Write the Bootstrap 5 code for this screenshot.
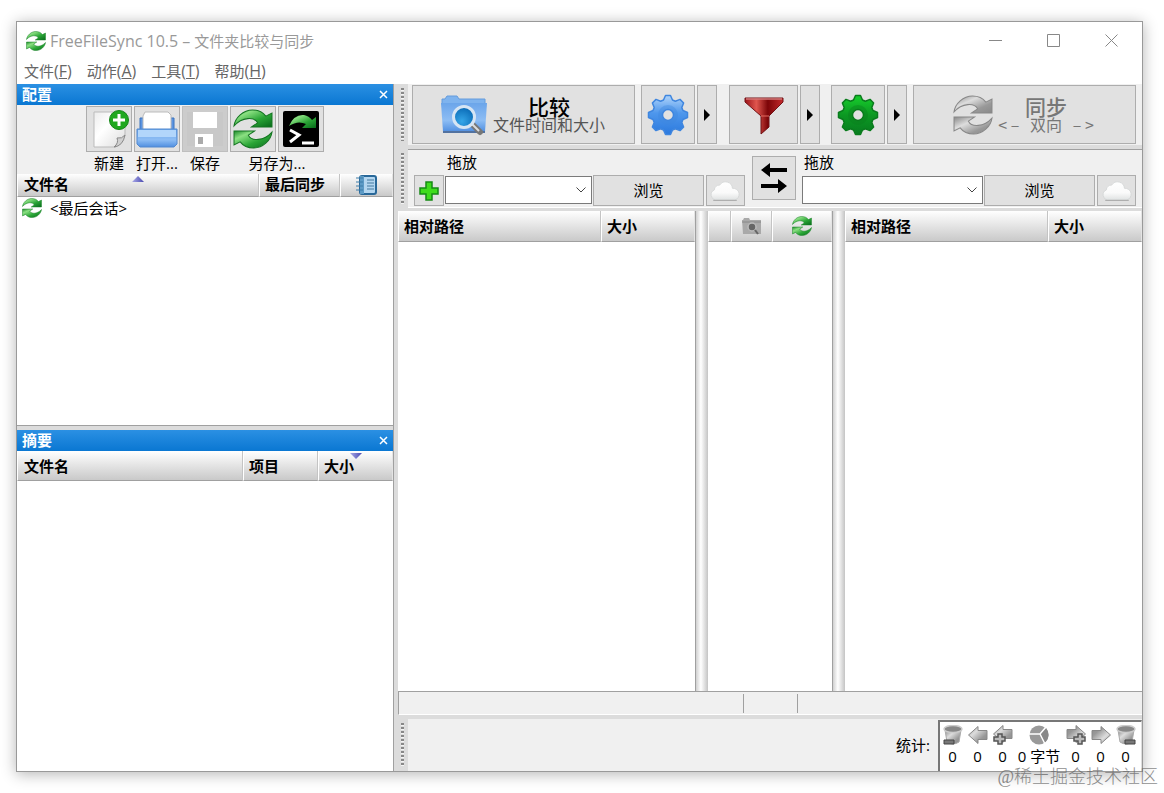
<!DOCTYPE html>
<html lang="zh-CN">
<head>
<meta charset="utf-8">
<meta name="viewport" content="width=device-width, initial-scale=1">
<title>FreeFileSync 10.5</title>
<link href="https://cdn.jsdelivr.net/npm/bootstrap@5.3.0/dist/css/bootstrap.min.css" rel="stylesheet">
<style>
body{font-family:"Open Sans","Noto Sans CJK SC",sans-serif;font-size:15px;line-height:20px;color:#000;background:#fff}
.page{min-height:100vh;padding:21px 21px 21px 16px}
.window{border:1px solid #999;box-shadow:0 2px 14px rgba(0,0,0,.3);background:#fff}
.latin{font-size:16px}
.titlebar{height:37px;color:#999;padding:0 20px 0 9px}
.titlebar button{border:0;background:none;padding:0;width:22px;height:22px;display:grid;place-items:center}
.menubar{height:25px;padding:0 7px 2px;gap:15px}
.menubar a{color:#666;text-decoration:none}
.workspace{background:#dcdcdc}
.side{width:377px;border-right:1px solid #a0a0a0}
.caption-bar{height:21px;background:linear-gradient(#2b90e3,#0a77d2);color:#fff;padding:0 5px;font-weight:700;line-height:20px}
.caption-bar button{border:0;background:none;padding:0;width:9px;height:20px;display:grid;place-items:center}
.toolbox{background:#f0f0f0;height:69px;gap:2px;padding-top:1px}
.lbl{line-height:22px}
.tool{background:#e1e1e1;border:1px solid #adadad;border-radius:0;padding:0;color:#000;font-size:15px;line-height:20px;display:grid;place-items:center}
.tool:disabled{background:#ccc;border-color:#bfbfbf;opacity:1;color:#777}
.sq{width:46px;height:46px}
.grid-head{width:100%;table-layout:fixed;border-collapse:separate;border-spacing:0;line-height:20px}
.grid-head th{position:relative;padding:0 0 0 5px;height:30px;font-weight:700;background:linear-gradient(#fff,#e4e4e4 50%,#c9c9c9);border-bottom:1px solid #a0a0a0;border-left:1px solid #fff;border-right:1px solid #c4c4c4;white-space:nowrap}
.grid-head th:first-child{padding-left:6px}
.grid-head th:last-child{border-right-color:#e4e4e4}
.grid-head.short th{height:23px;padding-bottom:2px}
.grid-head.tall th{padding-left:5px;height:31px}
.grid-head.short th.pic,.grid-head.tall th.pic{text-align:center;padding:0}
.grid-head td{height:22px;padding:0 5px}
.sort-mark{position:absolute;top:2px;left:50%;margin-left:-6px}
.sort-mark.near{left:37px}
.pane{background:#fff}
.grip{width:10px;padding:4px 0 4px 3px}
.grip::before{content:"";display:block;width:3px;height:100%;background:repeating-linear-gradient(#888 0 2px,#f4f4f4 2px 3px,#dcdcdc 3px 4px)}
.bar{background:#f0f0f0}
.big{height:59px}
.w-cfg{width:54px}.w-filter{width:69px}.w-drop{width:20px}
.bar .main-act{flex:1 1 0;display:flex;align-items:center;justify-content:center;gap:5px;padding-right:2px;font-family:"Noto Sans CJK SC",sans-serif}
.main-act strong{display:block;font-size:21px;line-height:20px;font-weight:500}
.main-act small{display:block;font-size:16px;line-height:17px;color:#555;white-space:pre}
.main-act.off,.main-act.off small{color:#777}
.folders{border-top:1px solid #a0a0a0;border-bottom:1px solid #fff;padding:6px 6px 0;height:59px}
.g1{gap:1px}.g2{gap:2px}.g6{gap:6px}
.drag{line-height:12px;height:19px}
.combo{--bs-form-select-bg-img:url("data:image/svg+xml,%3Csvg xmlns='http://www.w3.org/2000/svg' viewBox='0 0 12 12'%3E%3Cpath d='M1.500 3.500 6 8l4.500-4.500' fill='none' stroke='%23444'/%3E%3C/svg%3E");background-image:var(--bs-form-select-bg-img);background-size:12px;background-position:right 4px center;border:1px solid #7a7a7a;border-radius:0;height:28px;padding:0 20px 0 4px;font-size:15px;flex:1 1 0;width:0;margin-top:1px}
.field{height:31px}
.browse{width:111px;padding-bottom:2px}.cloud{width:39px;margin-left:1px}.plus{width:30px}
.swap{width:44px;height:44px;margin:0 6px 0 7px}
.split{width:13px;background:linear-gradient(90deg,#a0a0a0 0 1px,#d0d0d0 1px,#fff 45%,#c4c4c4)}
.mid{width:124px}
.status{background:#f0f0f0;border-top:1px solid #a0a0a0;border-left:1px solid #a0a0a0;border-bottom:1px solid #fff;height:24px}
.status div{border-right:1px solid #a0a0a0;margin:2px 0 1px}
.status div:last-child{border:0}
.stats{height:52px}
.stat-box{background:#fff;border:2px solid #777;border-width:2px 1px 0 2px;border-right-color:#ddd;height:51px;padding-right:3px}
.stat-box div{width:25px;text-align:center;white-space:nowrap;line-height:20px}
.stat-box div.bytes{width:48px}
.stat-box svg{display:block;margin:3px auto 1px}
.watermark{position:absolute;right:6px;bottom:4px;font-family:"Liberation Serif","Noto Sans CJK SC",serif;font-size:18px;font-weight:300;line-height:24px;color:#666;opacity:.75}
svg{display:block}
</style>
</head>
<body>
<svg width="0" height="0" class="position-absolute" aria-hidden="true">
<defs>
<linearGradient id="green" x1="0" y1="0" x2="1" y2="1"><stop offset="0" stop-color="#1c8a2a"/><stop offset=".25" stop-color="#8be082"/><stop offset=".6" stop-color="#2aa536"/><stop offset="1" stop-color="#07691a"/></linearGradient>
<linearGradient id="grey" x1="0" y1="0" x2="1" y2="1"><stop offset="0" stop-color="#888"/><stop offset=".35" stop-color="#ddd"/><stop offset=".7" stop-color="#999"/><stop offset="1" stop-color="#888"/></linearGradient>
<linearGradient id="gblue" x1="0" y1="0" x2="0" y2="1"><stop offset="0" stop-color="#b0d4fa"/><stop offset=".45" stop-color="#4e97ec"/><stop offset="1" stop-color="#2b79de"/></linearGradient>
<linearGradient id="ggreen" x1="0" y1="0" x2="0" y2="1"><stop offset="0" stop-color="#17cf2c"/><stop offset=".5" stop-color="#0c9822"/><stop offset="1" stop-color="#087c20"/></linearGradient>
<linearGradient id="fold" x1="0" y1="0" x2="0" y2="1"><stop offset="0" stop-color="#6ba5ea"/><stop offset=".6" stop-color="#8dbdf4"/><stop offset="1" stop-color="#4f8ee0"/></linearGradient>
<linearGradient id="red" x1="0" y1="0" x2="1" y2="0"><stop offset="0" stop-color="#9b1218"/><stop offset=".3" stop-color="#e0564e"/><stop offset=".6" stop-color="#7c0508"/><stop offset="1" stop-color="#c42a2c"/></linearGradient>
<linearGradient id="paper" x1="0" y1="0" x2="1" y2="1"><stop offset="0" stop-color="#ececec"/><stop offset=".4" stop-color="#fff"/><stop offset="1" stop-color="#ddd"/></linearGradient>
<linearGradient id="sort" x1="0" y1="0" x2="1" y2="0"><stop offset="0" stop-color="#a9a9e8"/><stop offset="1" stop-color="#4a4ab0"/></linearGradient>
<radialGradient id="lens" cx=".4" cy=".7" r=".7"><stop offset="0" stop-color="#35a6e8"/><stop offset="1" stop-color="#0868b4"/></radialGradient>
<linearGradient id="cloudfill" x1="0" y1="0" x2="0" y2="1"><stop offset="0" stop-color="#fff"/><stop offset=".6" stop-color="#fafafa"/><stop offset="1" stop-color="#dfe2e2"/></linearGradient>
<symbol id="sync" viewBox="0 0 39 38"><path d="M1 16C2 8 10 .5 19 .5c6 0 10 2 13 6l6-3V17H18l6-4C21 7 9 7 1 16Z"/><path d="M38 22c-1 8-9 15.500-18 15.500-6 0-10-2-13-6l-6 3V21h20l-6 4c3 6 15 6 23-3Z"/></symbol>
<symbol id="gear" viewBox="-21 -21 42 42"><path fill-rule="evenodd" stroke-linejoin="round" stroke-width="1.500" d="M15-4.500 19.500-2.500V2.500L15 4.500 13.800 7.400 15.600 12 12 15.600 7.400 13.800 4.500 15 2.500 19.500H-2.500L-4.500 15-7.400 13.800-12 15.600-15.600 12-13.800 7.400-15 4.500-19.500 2.500V-2.500L-15-4.500-13.800-7.400-15.600-12-12-15.600-7.400-13.800-4.500-15-2.500-19.500H2.500L4.500-15 7.400-13.800 12-15.600 15.600-12 13.800-7.400ZM5.500 0A5.500 5.500 0 1 0-5.500 0 5.500 5.500 0 1 0 5.500 0Z"/><circle r="8" fill="none" stroke-width="4" stroke-opacity=".4"/></symbol>
<symbol id="cloudicon" viewBox="0 0 30 20"><path d="M6 18.500a5 5 0 0 1-1-9.500 4.500 4.500 0 0 1 5-4.500 6.500 6.500 0 0 1 12 3 5.600 5.600 0 0 1 2 11Z" fill="url(#cloudfill)" stroke="#d3d6d6" stroke-width=".8"/><path d="M4 18.800h22" stroke="#aaa"/></symbol>
<symbol id="arrow" viewBox="0 0 20 18"><path d="M.5 9 10 .5v4h9v9h-9v4Z" fill="url(#grey)" stroke="#888"/></symbol>
<symbol id="bin" viewBox="0 0 20 20"><path d="M2 5l2 12q6 4 12 0L18 5Z" fill="url(#grey)" stroke="#aaa"/><ellipse cx="10" cy="4" rx="9" ry="3.500" fill="#888" stroke="#ccc" stroke-width="1.500"/></symbol>
</defs>
</svg>
<div class="page position-relative d-flex">
<main class="window d-flex flex-column flex-fill">
<header class="titlebar d-flex align-items-center">
<svg width="20" height="20" fill="url(#green)" stroke="#19822a"><use href="#sync"/></svg>
<span class="ms-1"><span class="latin">FreeFileSync 10.5 –</span> 文件夹比较与同步</span>
<div class="d-flex ms-auto" style="gap:36px">
<button type="button" aria-label="最小化"><svg width="13" height="13"><path d="M0 6.500h13" stroke="#888"/></svg></button>
<button type="button" aria-label="最大化"><svg width="13" height="13"><path d="M.5.500h12v12H.5Z" fill="none" stroke="#888"/></svg></button>
<button type="button" aria-label="关闭"><svg width="13" height="13"><path d="M.5.500l12 12m0-12-12 12" stroke="#888"/></svg></button>
</div>
</header>
<nav class="menubar d-flex align-items-center"><a href="#">文件<span class="latin">(<u>F</u>)</span></a><a href="#">动作<span class="latin">(<u>A</u>)</span></a><a href="#">工具<span class="latin">(<u>T</u>)</span></a><a href="#">帮助<span class="latin">(<u>H</u>)</span></a></nav>
<div class="workspace d-flex flex-fill">
<aside class="side d-flex flex-column flex-shrink-0">
<div class="caption-bar d-flex justify-content-between"><span>配置</span><button type="button" aria-label="关闭配置"><svg width="9" height="9"><path d="M1 1l7 7m0-7-7 7" stroke="#fff" stroke-width="1.500"/></svg></button></div>
<div class="toolbox d-flex justify-content-center text-center">
<div><button class="tool sq" type="button" aria-label="新建"><svg width="42" height="42" viewBox="0 0 42 42"><path d="M6 4h31v24L28 39H6Z" fill="url(#paper)" stroke="#bbb"/><path d="M37 27q-3 4-8 3 2 5-3 9 9-1 11-12Z" fill="#d0d0d0" stroke="#888"/><circle cx="31" cy="12" r="9.500" fill="#20a81f" stroke="#158718"/><path d="M31 6v12m-6-6h12" stroke="#fff" stroke-width="3"/></svg></button><div class="lbl text-nowrap">新建</div></div>
<div><button class="tool sq" type="button" aria-label="打开"><svg width="42" height="42" viewBox="0 0 42 42"><path d="M4 10h34v14H4Z" fill="#5c95e2" stroke="#3a72bd"/><path d="M9 4h23l3 3v18H7V8Z" fill="#fff" stroke="#bbb"/><path d="M1 21h40v15l-3 3H4l-3-3Z" fill="url(#fold)" stroke="#5389cf"/><path d="M2 22h38v7H2Z" fill="#b2d6fb"/></svg></button><div class="lbl text-nowrap">打开...</div></div>
<div><button class="tool sq" type="button" disabled aria-label="保存"><svg width="42" height="42" viewBox="0 0 42 42"><path d="M3 4h36v34H3Z" fill="#c8c8c8"/><path d="M9 4h24v16H9ZM11 26h18v13H11Z" fill="#fff"/><path d="M14 29h5v7h-5Z" fill="#aaa"/></svg></button><div class="lbl text-nowrap">保存</div></div>
<div><div class="d-flex g2"><button class="tool sq" type="button" aria-label="另存为"><svg width="40" height="40" fill="url(#green)" stroke="#157523"><use href="#sync"/></svg></button><button class="tool sq" type="button" aria-label="另存为批处理"><svg width="38" height="38" viewBox="0 0 38 38"><rect x="1" y="1" width="36" height="36" rx="2"/><path d="M7 16Q12 4 22 5q5 1 8 5l4-3v11H20l4-4q-8-4-17 2Z" fill="url(#green)"/><path d="M8 20l9 5-9 7" fill="none" stroke="#fff" stroke-width="3"/><path d="M20 33h12" stroke="#fff" stroke-width="3"/></svg></button></div><div class="lbl text-nowrap">另存为...</div></div>
</div>
<div class="pane flex-shrink-0" style="height:251px">
<table class="grid-head short">
<colgroup><col><col style="width:81px"><col style="width:53px"></colgroup>
<thead><tr><th scope="col">文件名<svg class="sort-mark" width="12" height="6"><path d="M0 6 6 0l6 6Z" fill="url(#sort)"/></svg></th><th scope="col">最后同步</th><th scope="col" class="pic" aria-label="日志"><svg class="mx-auto" width="21" height="20" viewBox="0 0 21 20"><rect x="4" y="1" width="16" height="18" rx="2" fill="#b3d6f0" stroke="#286899" stroke-width="2"/><path d="M4 1h4v18H4Z" fill="#5d9bc6"/><path d="M0 3h7M0 7h7M0 11h7M0 15h7" stroke="#3d7da9"/><path d="M11 5h7M11 8h7M11 11h7M11 14h7" stroke="#447aa0"/></svg></th></tr></thead>
<tbody><tr><td colspan="3"><div class="d-flex align-items-center"><svg width="20" height="20" fill="url(#green)" stroke="#19822a"><use href="#sync"/></svg><span class="ms-2">&lt;最后会话&gt;</span></div></td></tr></tbody>
</table>
</div>
<div style="height:5px;border-top:1px solid #a0a0a0" class="flex-shrink-0"></div>
<div class="caption-bar d-flex justify-content-between flex-shrink-0"><span>摘要</span><button type="button" aria-label="关闭摘要"><svg width="9" height="9"><path d="M1 1l7 7m0-7-7 7" stroke="#fff" stroke-width="1.500"/></svg></button></div>
<div class="pane flex-fill">
<table class="grid-head">
<colgroup><col><col style="width:75px"><col style="width:75px"></colgroup>
<thead><tr><th scope="col">文件名</th><th scope="col">项目</th><th scope="col">大小<svg class="sort-mark near" width="12" height="6"><path d="M0 0l6 6 6-6Z" fill="url(#sort)"/></svg></th></tr></thead>
</table>
</div>
</aside>
<section class="d-flex flex-column flex-fill ps-1">
<div class="d-flex">
<div class="grip"></div>
<div class="bar flex-fill d-flex g6" style="padding:1px 6px 1px 4px">
<button type="button" class="tool big main-act"><svg width="48" height="42" viewBox="0 0 48 42"><path d="M2 5h3l2-3h10l2 3h26v6H2Z" fill="#7eb3ee" stroke="#659cdc"/><path d="M1 9h46l-2 29H3Z" fill="url(#fold)"/><path d="M3 38h42" stroke="#5272a0" stroke-width="2"/><path d="M31 29l9 9" stroke="#777" stroke-width="6" stroke-linecap="round"/><path d="M32 30l7 7" stroke="#ddd" stroke-width="2"/><circle cx="24" cy="23" r="10.500" fill="url(#lens)" stroke="#d6e5f4" stroke-width="3"/></svg><span><strong>比较</strong><small>文件时间和大小</small></span></button>
<div class="d-flex g2"><button type="button" class="tool big w-cfg" aria-label="比较设置"><svg width="42" height="42" fill="url(#gblue)" stroke="#3f86df"><use href="#gear"/></svg></button><button type="button" class="tool big w-drop" aria-label="更多比较设置"><svg width="6" height="12"><path d="M0 0l6 6-6 6Z"/></svg></button></div>
<div class="d-flex g2" style="margin:0 5px 0 6px"><button type="button" class="tool big w-filter" aria-label="筛选"><svg width="40" height="40" viewBox="0 0 40 40"><path d="M1 3h38v4L25 21v11l-8 7V21L1 7Z" fill="url(#red)" stroke="#701216"/><path d="M2 4h36" stroke="#d17978" stroke-width="1.500"/><path d="M17 21h8" stroke="#e36a60"/></svg></button><button type="button" class="tool big w-drop" aria-label="更多筛选"><svg width="6" height="12"><path d="M0 0l6 6-6 6Z"/></svg></button></div>
<div class="d-flex g2"><button type="button" class="tool big w-cfg" aria-label="同步设置"><svg width="42" height="42" fill="url(#ggreen)" stroke="#0a7c1d"><use href="#gear"/></svg></button><button type="button" class="tool big w-drop" aria-label="更多同步设置"><svg width="6" height="12"><path d="M0 0l6 6-6 6Z"/></svg></button></div>
<button type="button" class="tool big main-act off"><svg width="40" height="40" fill="url(#grey)" stroke="#888"><use href="#sync"/></svg><span><strong>同步</strong><small>&lt; –   双向   – &gt;</small></span></button>
</div>
</div>
<div class="d-flex" style="padding-top:4px">
<div class="grip"></div>
<div class="folders bar flex-fill d-flex">
<div style="flex:329 1 0"><label class="drag d-block" for="leftDir" style="padding-left:33px">拖放</label><div class="d-flex g1"><button type="button" class="tool field plus" aria-label="添加"><svg width="20" height="20"><path d="M7 1h6v6h6v6h-6v6H7v-6H1V7h6Z" fill="#3fdc1c" stroke="#168a14" stroke-width="1.500"/></svg></button><select id="leftDir" class="form-select combo"><option></option></select><button type="button" class="tool field browse">浏览</button><button type="button" class="tool field cloud" aria-label="左侧云端"><svg width="32" height="22"><use href="#cloudicon"/></svg></button></div></div>
<button type="button" class="tool swap" aria-label="交换"><svg width="26" height="30" viewBox="0 0 26 30"><path d="M0 7l9-7v5h17v4H9v5ZM26 23l-9-7v5H0v4h17v5Z"/></svg></button>
<div style="flex:332 1 0"><label class="drag d-block" for="rightDir" style="padding-left:2px">拖放</label><div class="d-flex g1"><select id="rightDir" class="form-select combo"><option></option></select><button type="button" class="tool field browse">浏览</button><button type="button" class="tool field cloud" aria-label="右侧云端"><svg width="32" height="22"><use href="#cloudicon"/></svg></button></div></div>
</div>
</div>
<div class="d-flex flex-fill" style="padding-top:3px">
<div class="pane" style="flex:1 1 0"><table class="grid-head tall"><colgroup><col><col style="width:94px"></colgroup><thead><tr><th scope="col">相对路径</th><th scope="col">大小</th></tr></thead></table></div>
<div class="split"></div>
<div class="pane mid"><table class="grid-head tall"><colgroup><col style="width:23px"><col style="width:41px"><col></colgroup><thead><tr><th></th><th class="pic" aria-label="类别"><svg class="mx-auto" width="20" height="18" viewBox="0 0 20 18"><path d="M0 3h1l1-2h5l1 2h11v14H1Z" fill="#a9a9a9"/><path d="M0 5h19" stroke="#888"/><circle cx="10" cy="10" r="4" fill="#666" stroke="#bbb" stroke-width="1.500"/><path d="M13 13l3 4" stroke="#666" stroke-width="2"/></svg></th><th class="pic" aria-label="操作"><svg class="mx-auto" width="20" height="20" fill="url(#green)" stroke="#19822a"><use href="#sync"/></svg></th></tr></thead></table></div>
<div class="split"></div>
<div class="pane" style="flex:1 1 0"><table class="grid-head tall"><colgroup><col><col style="width:94px"></colgroup><thead><tr><th scope="col">相对路径</th><th scope="col">大小</th></tr></thead></table></div>
</div>
<div class="status d-flex"><div style="flex:1 1 0"></div><div style="width:54px"></div><div style="flex:1 1 0"></div></div>
<div class="d-flex" style="padding-top:4px">
<div class="grip"></div>
<div class="bar stats flex-fill d-flex align-items-center justify-content-end"><span class="me-1 pe-1">统计:</span>
<div class="stat-box d-flex align-self-end">
<div><svg width="20" height="20" viewBox="0 0 20 20"><use href="#bin"/><path d="M1 15h10v4H1Z" fill="#777" stroke="#444"/></svg>0</div>
<div><svg width="20" height="20"><use href="#arrow"/></svg>0</div>
<div><svg width="20" height="20" viewBox="0 0 20 20"><use href="#arrow" width="20" height="18"/><path d="M5 9h4v3h3v4H9v3H5v-3H1v-4h4Z" fill="#bbb" stroke="#555" stroke-width="1.500"/></svg>0</div>
<div class="bytes"><svg width="20" height="20" viewBox="0 0 20 20"><circle cx="10" cy="10" r="9.500" fill="#999"/><path d="M11 10 17 3A10 10 0 0 1 15 18Z" fill="#888"/><path d="M0 9h11l6-7M11 9l5 10" stroke="#fff" stroke-width="1.500" fill="none"/></svg>0 字节</div>
<div><svg width="20" height="20" viewBox="0 0 20 20"><g transform="rotate(180 10 9)"><use href="#arrow" width="20" height="18"/></g><path d="M12 9h4v3h3v4h-3v3h-4v-3H8v-4h4Z" fill="#bbb" stroke="#555" stroke-width="1.500"/></svg>0</div>
<div><svg width="20" height="20" viewBox="0 0 20 20"><g transform="rotate(180 10 10)"><use href="#arrow" width="20" height="20"/></g></svg>0</div>
<div><svg width="20" height="20" viewBox="0 0 20 20"><use href="#bin"/><path d="M9 15h10v4H9Z" fill="#777" stroke="#444"/></svg>0</div>
</div></div>
</div>
</section>
</div>
</main>
<div class="watermark">@稀土掘金技术社区</div>
</div>
<script src="https://cdn.jsdelivr.net/npm/bootstrap@5.3.0/dist/js/bootstrap.bundle.min.js"></script>
</body>
</html>
